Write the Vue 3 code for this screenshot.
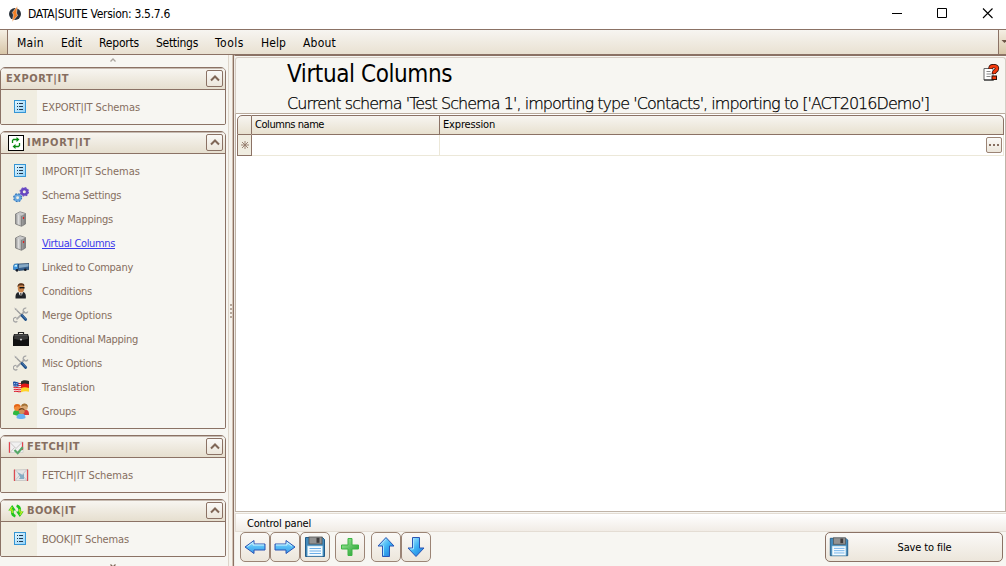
<script setup>
import { ref } from "vue";

const menu = [
  { label: "Main", width: 27 },
  { label: "Edit", width: 21 },
  { label: "Reports", width: 40 },
  { label: "Settings", width: 42 },
  { label: "Tools", width: 29 },
  { label: "Help", width: 25 },
  { label: "About", width: 33 },
];

const groups = [
  {
    title: "EXPORT|IT",
    width: 63,
    items: [{ label: "EXPORT|IT Schemas", icon: "list", width: 98 }],
  },
  {
    title: "IMPORT|IT",
    width: 64,
    icon: "import",
    items: [
      { label: "IMPORT|IT Schemas", icon: "list", width: 98 },
      { label: "Schema Settings", icon: "gears", width: 79 },
      { label: "Easy Mappings", icon: "server", width: 71 },
      { label: "Virtual Columns", icon: "server", width: 73 },
      { label: "Linked to Company", icon: "truck", width: 91 },
      { label: "Conditions", icon: "agent", width: 50 },
      { label: "Merge Options", icon: "tools", width: 70 },
      { label: "Conditional Mapping", icon: "case", width: 96 },
      { label: "Misc Options", icon: "tools", width: 60 },
      { label: "Translation", icon: "flags", width: 53 },
      { label: "Groups", icon: "people", width: 34 },
    ],
  },
  {
    title: "FETCH|IT",
    width: 53,
    icon: "mail-check",
    items: [{ label: "FETCH|IT Schemas", icon: "mail", width: 91 }],
  },
  {
    title: "BOOK|IT",
    width: 49,
    icon: "sync",
    items: [{ label: "BOOK|IT Schemas", icon: "list", width: 87 }],
  },
];

const tools = ["left", "right", "disk", "plus", "up", "down"];

const active = ref("Virtual Columns");

// spreads the letters so that a label takes the given width
const vFit = {
  mounted(el, { value }) {
    const natural = el.getBoundingClientRect().width;
    const count = el.textContent.length;
    el.style.letterSpacing = `${(value - natural) / count}px`;
  },
};
</script>

<template>
  <div class="window">
    <svg class="defs" width="0" height="0">
      <defs>
        <linearGradient id="g-blue" x1="0" y1="0" x2="1" y2="1">
          <stop offset="0" stop-color="#c8f4ff" />
          <stop offset="0.5" stop-color="#3fb4f4" />
          <stop offset="1" stop-color="#1673d8" />
        </linearGradient>
        <linearGradient id="g-arrow" x1="0" y1="0" x2="0" y2="1">
          <stop offset="0" stop-color="#b5ecff" />
          <stop offset="0.5" stop-color="#55bdf5" />
          <stop offset="1" stop-color="#3f9be8" />
        </linearGradient>
        <linearGradient id="g-green" x1="0" y1="0" x2="1" y2="1">
          <stop offset="0" stop-color="#a4eda0" />
          <stop offset="1" stop-color="#1d9a2a" />
        </linearGradient>
        <linearGradient id="g-list" x1="0" y1="0" x2="1" y2="1">
          <stop offset="0" stop-color="#e6f8ff" />
          <stop offset="1" stop-color="#8fd0f8" />
        </linearGradient>
        <linearGradient id="g-server" x1="0" y1="0" x2="1" y2="0">
          <stop offset="0" stop-color="#8c8c8c" />
          <stop offset="0.3" stop-color="#dcdcdc" />
          <stop offset="0.6" stop-color="#a2a2a2" />
          <stop offset="1" stop-color="#7d7d7d" />
        </linearGradient>
      </defs>

      <symbol id="list" viewBox="0 0 16 16">
        <rect x="1.500" y="1.500" width="11" height="12" fill="url(#g-list)" stroke="#3595d4" />
        <path d="M4 4.500h1M4 7.500h1M4 10.500h1M6 4.500h4M6 7.500h4M6 10.500h4" stroke="#203850" />
      </symbol>
      <symbol id="import" viewBox="0 0 16 16">
        <rect x="0.500" y="0.500" width="15" height="15" fill="#fff" stroke="#000" />
        <path d="M4.500 8V5.500l1-1H10M11.500 8v2.500l-1 1H6" fill="none" stroke="#088a10" stroke-width="1.300" />
        <path d="M8.500 2l3 2.500-3 2.500zM7.500 9l-3 2.500 3 2.500z" fill="#088a10" />
      </symbol>
      <symbol id="gears" viewBox="0 0 16 16">
        <circle cx="11.300" cy="4.800" r="2.800" fill="none" stroke="#6748c0" stroke-width="2.500" />
        <circle cx="11.300" cy="4.800" r="4.100" fill="none" stroke="#6f50c8" stroke-width="1.400" stroke-dasharray="1.700 1.500" />
        <circle cx="4.600" cy="10.800" r="2.700" fill="none" stroke="#68a7df" stroke-width="2.500" />
        <circle cx="4.600" cy="10.800" r="3.900" fill="none" stroke="#3676b8" stroke-width="1.300" stroke-dasharray="1.600 1.500" />
      </symbol>
      <symbol id="server" viewBox="0 0 16 16">
        <path d="M2.500 3L7 0.800l5.500 1.700v10.500L8.500 15.300l-6-2.300z" fill="url(#g-server)" stroke="#777" stroke-width="0.800" />
        <path d="M3 3.200L7.200 1.200l5 1.500L8.500 4.500z" fill="#c8c8c8" />
        <path d="M8.500 5v10" stroke="#777" stroke-width="0.700" />
        <path d="M10.500 6v2" stroke="#e02020" stroke-width="1.200" />
      </symbol>
      <symbol id="truck" viewBox="0 0 16 16">
        <path d="M5 5L16 4.500v6L6 11.500 5 10z" fill="#365f8c" stroke="#143455" stroke-width="0.600" />
        <path d="M6 5.600l9.500-0.500v2.400L6 9z" fill="#86a9c5" />
        <path d="M0.300 7.500l1-2.300 3.500-0.400v6.400l-4.500-0.800z" fill="#3b91dd" stroke="#2364a0" stroke-width="0.600" />
        <path d="M1.200 7.400l0.800-1.500 2-0.200v2z" fill="#c6f3ff" />
        <circle cx="4" cy="11.300" r="1.400" fill="#151a25" />
        <circle cx="12.300" cy="10.700" r="1.300" fill="#151a25" />
      </symbol>
      <symbol id="agent" viewBox="0 0 16 16">
        <path d="M2.500 15.500c-0.300-3.500 0.500-6 3-6.500h4.500c2.500 0.500 3.200 3.500 2.800 6.500z" fill="#20242a" />
        <path d="M5.500 9h4.500l-1.500 4.500-2-1.500z" fill="#f2f2f2" />
        <path d="M7.300 10h1l0.500 4-1.200 1z" fill="#111" />
        <ellipse cx="8" cy="5" rx="3.200" ry="4.500" fill="#ce874d" />
        <path d="M4.500 4.300C4.300 1 6 0 8.500 0.300c2 0 3.300 1.200 2.800 3.200L9.500 2.300 6 2.500z" fill="#5b351c" />
        <path d="M6.500 4h5v1.400H9.500l-0.500-0.500-0.600 0.500H6.500z" fill="#111" />
      </symbol>
      <symbol id="tools" viewBox="0 0 16 16">
        <path d="M2 1.500l7 7" stroke="#999" stroke-width="1.300" />
        <path d="M1.500 1l2 1 0.500 2" fill="none" stroke="#bbb" />
        <path d="M3.500 12.300l8.200-8" stroke="#a9a9a9" stroke-width="1.700" />
        <path d="M13.300 1.200a2.400 2.400 0 1 0 1.500 3.300M3.500 10.500a2.300 2.300 0 1 0 0.800 3.800" fill="none" stroke="#a5a5a5" stroke-width="1.300" />
        <path d="M9 8.500l3.700 4" stroke="#1f4f88" stroke-width="2.800" stroke-linecap="round" />
        <path d="M9.200 8.200l4 4.300" stroke="#6b9bcb" stroke-width="0.600" />
      </symbol>
      <symbol id="case" viewBox="0 0 16 16">
        <path d="M5.500 3V1.500h5V3" fill="none" stroke="#222" stroke-width="1.200" />
        <path d="M1 3h14l1 3v9H0V6z" fill="#111" />
        <path d="M1.500 3.700h13l0.500 4-5 1.300H6L1 7.700z" fill="#393939" />
        <path d="M1.500 4h13" stroke="#777" stroke-width="0.700" />
        <rect x="7.200" y="7.800" width="1.600" height="1.600" fill="#f2f2f2" />
      </symbol>
      <symbol id="flags" viewBox="0 0 16 16">
        <path d="M0 3c2.500-1.500 4 1.500 8 0v9.500c-3 1.500-4-1-7 0.500z" fill="#f6e7e7" />
        <path d="M0.500 8.500c3-1 4 1 7.500 0M0.700 10.500c3-1 4 1 7.500 0M1 12.500c3-1 4 1 7 0M5 4.500h3.500M5 6.500h3.500" fill="none" stroke="#da1c2c" stroke-width="1.200" />
        <path d="M0 3c2-1.200 4 0.500 5.500 0.400V7.500H0.500z" fill="#1c50a5" />
        <path d="M1 4.500h4M1.500 6.200h3.500" stroke="#d5e6fa" stroke-width="0.800" stroke-dasharray="0.900 0.900" />
        <path d="M8 2.500c2.500-1.800 5.500-1.300 8-0.500v4c-3-1-5.500-0.700-8 0.500z" fill="#2b2b2b" />
        <path d="M8 5.500c2.500-1.500 5-1.200 8-0.200v4c-3-1-5.500 0-8 0.800z" fill="#e41717" />
        <path d="M8 9.300c2.500-1.500 5-1.300 8-0.300v3.800c-3-1.300-5.500-0.300-8 0.400z" fill="#ffd428" />
      </symbol>
      <symbol id="people" viewBox="0 0 16 16">
        <path d="M0 11.500c0-3.500 1-4.500 4.500-4.500s4 1.500 3.500 5l-3 1z" fill="#2fb842" />
        <path d="M8.500 12c0-3.500 1-5 4-5s3.500 2 3.500 5z" fill="#d83a3c" />
        <circle cx="4.300" cy="4.500" r="3.400" fill="#f28a36" />
        <path d="M1 4.500C0.500 0.500 7.300 0 7.500 4L4.500 3z" fill="#e3641a" />
        <circle cx="11.500" cy="4" r="3.300" fill="#d9a873" />
        <path d="M8.200 3.800C8-0.500 15-0.500 14.800 4L12 2.500z" fill="#a57437" />
        <path d="M3.500 15c0-3 1.500-4.500 4.700-4.500S12.500 12 12.500 15c-2.200 1.300-6.800 1.300-9 0z" fill="#67b2f3" />
        <circle cx="8.700" cy="7.900" r="3" fill="#d29259" />
        <path d="M5.500 7.500C5.300 4 12 4 11.800 7.500L9 6.200z" fill="#70441f" />
      </symbol>
      <symbol id="mail" viewBox="0 0 16 16">
        <path d="M1 3l14-0.500v11H1z" fill="#e4e5e6" stroke="#b5b5b5" stroke-width="0.600" />
        <path d="M1.500 2.500v11.500M14.500 2.500v11.500" stroke="#dd4a50" stroke-width="1.200" />
        <path d="M2.500 3l5.500 6 5.500-6M2.500 13l4-4.500M13.500 13l-4-4.500" fill="none" stroke="#c3c7cb" />
        <path d="M4.500 5.500c2 0.500 3.500 1.500 5 2.500l1.500-1.500v5.500H5.800l1.500-1.700z" fill="#86adc4" />
      </symbol>
      <symbol id="mail-check" viewBox="0 0 16 16">
        <path d="M1 3h14v10.500H1z" fill="#f1f1f1" stroke="#c5c5c5" stroke-width="0.600" />
        <path d="M1.500 3v11M14.500 3v8" stroke="#e3414c" stroke-width="1.200" />
        <path d="M2 3.500l6 6 6-6M2 13.500l4.500-5" fill="none" stroke="#c9c5c5" />
        <path d="M6.500 11l3.200 3.200 5-6" fill="none" stroke="#57a868" stroke-width="2.200" />
      </symbol>
      <symbol id="sync" viewBox="0 0 16 16">
        <path d="M7 14.500C3.500 13.500 2.500 11 3 7.500H0.300L4.200 2 8 7.500H5.800c-0.500 2.500 0 3.500 2 4.500z" fill="#1fc51f" />
        <path d="M9 1.500c3.500 1 4.500 3.500 4 7h2.700L11.800 14 8 8.500h2.200c0.500-2.500 0-3.500-2-4.500z" fill="#1fc51f" />
        <path d="M4.200 4L2 7h2.200v3M11.800 12L14 9h-2.200V6" fill="none" stroke="#d0f020" stroke-width="1.100" />
      </symbol>
      <symbol id="left" viewBox="0 0 24 24">
        <path d="M2 12l9-6.500V9h11v6H11v3.500z" fill="url(#g-arrow)" stroke="#2a55b5" stroke-linejoin="round" />
        <path d="M4.500 11.500L10 7.500v2.500h11" fill="none" stroke="#c9f2ff" />
      </symbol>
      <symbol id="right" viewBox="0 0 24 24">
        <path d="M22 12l-9-6.500V9H2v6h11v3.500z" fill="url(#g-arrow)" stroke="#2a55b5" stroke-linejoin="round" />
        <path d="M3 10h11V7.500l5 3.700" fill="none" stroke="#c9f2ff" />
      </symbol>
      <symbol id="up" viewBox="0 0 24 24">
        <path d="M12 2.500l8 8.500h-4.500v10.500h-7V11H4z" fill="url(#g-blue)" stroke="#2a55b5" stroke-linejoin="round" />
        <path d="M6.500 10L12 4M9.500 10.500v10" fill="none" stroke="#a4e4ff" />
      </symbol>
      <symbol id="down" viewBox="0 0 24 24">
        <path d="M12 21.500L4 13h4.500V2.500h7V13H20z" fill="url(#g-blue)" stroke="#2a55b5" stroke-linejoin="round" />
        <path d="M9.500 3.500V14h-3" fill="none" stroke="#a4e4ff" />
      </symbol>
      <symbol id="plus" viewBox="0 0 24 24">
        <path d="M10 3.500h4v6.500h6.500v4H14v6.500h-4V14H3.500v-4H10z" fill="url(#g-green)" stroke="#3db544" />
      </symbol>
      <symbol id="disk" viewBox="0 0 24 24">
        <path d="M2.500 2.500h17l2 2v17h-19z" fill="#438abb" stroke="#215b88" />
        <rect x="6" y="2" width="13" height="7" fill="#929292" stroke="#555" stroke-width="0.800" />
        <rect x="13.500" y="2.800" width="3" height="5" fill="#3f3c3d" />
        <rect x="4.500" y="11" width="15" height="10" fill="#f4fbff" stroke="#a9d1e6" stroke-width="0.600" />
        <path d="M6.500 13.500h11.500M6.500 16h11.500M6.500 18.500h11.500" stroke="#6baee8" />
      </symbol>
    </svg>

    <header class="titlebar">
      <svg class="logo" width="16" height="16" viewBox="0 0 16 16">
        <ellipse cx="8" cy="8" rx="6" ry="6" fill="#29313b" />
        <path d="M10.500 0L5.300 6.500 6.500 9 5 16l5.600-6.500L9.500 7z" fill="#f17e25" stroke="#fff" stroke-width="0.500" />
      </svg>
      <span v-fit="142" class="app-name">DATA|SUITE Version: 3.5.7.6</span>
      <svg class="controls" width="106" height="14" viewBox="0 0 106 14">
        <path d="M1 6.500h10M46.500 1.500h9v9h-9z" fill="none" stroke="#000" />
        <path d="M92 1.500l9.500 9.500M101.500 1.500L92 11" stroke="#000" stroke-width="1.100" />
      </svg>
    </header>

    <nav class="menubar">
      <div class="grip"></div>
      <a v-for="m in menu" :key="m.label" class="menu-item"><span v-fit="m.width">{{ m.label }}</span></a>
      <div class="overflow">
        <svg width="7" height="4" viewBox="0 0 7 4"><path d="M0.500 0h6L3.500 3z" fill="#6e5648" /></svg>
      </div>
    </nav>

    <div class="body">
      <aside class="sidebar">
        <svg class="scroll" width="6" height="4" viewBox="0 0 6 4"><path d="M0.500 3.500L3 1l2.500 2.500" fill="none" stroke="#aaa49e" stroke-width="1.300" /></svg>
        <section v-for="g in groups" :key="g.title" class="group">
          <div class="group-head">
            <svg v-if="g.icon" class="head-icon" width="16" height="16"><use :href="'#' + g.icon" /></svg>
            <b v-fit="g.width">{{ g.title }}</b>
            <button class="collapse">
              <svg width="10" height="7" viewBox="0 0 10 7"><path d="M1 5.500l4-4 4 4" fill="none" stroke="#806757" stroke-width="2" /></svg>
            </button>
          </div>
          <ul class="items">
            <li v-for="i in g.items" :key="i.label" :class="{ active: i.label === active }" @click="active = i.label">
              <svg width="16" height="16"><use :href="'#' + i.icon" /></svg>
              <span v-fit="i.width">{{ i.label }}</span>
            </li>
          </ul>
        </section>
        <svg class="scroll last" width="6" height="4" viewBox="0 0 6 4"><path d="M0.500 0.500L3 3l2.500-2.500" fill="none" stroke="#806757" stroke-width="1.300" /></svg>
      </aside>

      <div class="splitter"><i v-for="n in 4" :key="n"></i></div>

      <main class="content">
        <div class="heading">
          <div>
            <h1><span v-fit="165">Virtual Columns</span></h1>
            <p><span v-fit="642">Current schema 'Test Schema 1', importing type 'Contacts', importing to ['ACT2016Demo']</span></p>
          </div>
          <svg class="help" width="17" height="17" viewBox="0 0 17 17">
            <path d="M1 4.500h9v11.500H1z" fill="#fff" stroke="#666" />
            <path d="M3.500 7.500h4M3.500 10h5M3.500 12.500h4" stroke="#888" />
            <path d="M1 16h10" stroke="#222" />
            <path d="M7.500 5V3.700C8 1.500 13.500 1.300 14 4s-3.200 3-3.200 6" fill="none" stroke="#30100c" stroke-width="4.200" />
            <path d="M7.500 4.500V3.700C8 1.500 13.500 1.500 14 4s-3.200 3-3.200 5.500" fill="none" stroke="#f43a0c" stroke-width="2.800" />
            <rect x="9" y="12" width="4.500" height="3.500" fill="#f43a0c" stroke="#30100c" />
          </svg>
        </div>

        <div class="grid-area">
          <div class="grid">
            <div class="cell head corner"></div>
            <div class="cell head"><span v-fit="69">Columns name</span></div>
            <div class="cell head end"><span v-fit="52">Expression</span></div>
            <div class="cell marker">
              <svg width="8" height="8" viewBox="0 0 8 8"><path d="M4 0v8M0 4h8M1 1l6 6M7 1L1 7" stroke="#91796a" stroke-width="0.900" /></svg>
            </div>
            <div class="cell"></div>
            <div class="cell editor">
              <button class="ellipsis"><i></i><i></i><i></i></button>
            </div>
          </div>
        </div>

        <div class="panel-title"><span v-fit="64">Control panel</span></div>
        <div class="toolbar">
          <button v-for="t in tools" :key="t" class="tool" :class="t">
            <svg width="24" height="24"><use :href="'#' + t" /></svg>
          </button>
          <button class="save">
            <svg width="22" height="22" viewBox="0 0 24 24"><use href="#disk" /></svg>
            <span class="save-label"><span v-fit="54">Save to file</span></span>
          </button>
        </div>
      </main>
    </div>
  </div>
</template>

<style>
body {
  margin: 0;
  overflow: hidden;
}
</style>

<style scoped>
.window {
  width: 1006px;
  height: 566px;
  display: flex;
  flex-direction: column;
  overflow: hidden;
  background: #f7f6f2;
  color: #000;
  font: 11px/14px Tahoma, "DejaVu Sans Condensed", "DejaVu Sans", sans-serif;
  font-stretch: condensed;
}
.window * {
  box-sizing: border-box;
}
span,
b {
  white-space: nowrap;
}
svg {
  display: block;
  flex: none;
}
.defs {
  position: absolute;
}
button {
  padding: 0;
  font: inherit;
  color: inherit;
  border: 1px solid #9b8475;
  background: linear-gradient(#faf9f7, #ece6db);
}

.titlebar {
  flex: none;
  height: 29px;
  display: flex;
  align-items: center;
  padding: 0 9px 2px 7px;
  background: #fff;
  font-size: 12px;
}
.app-name {
  margin-left: 5px;
}
.controls {
  margin-left: auto;
}

.menubar {
  flex: none;
  height: 26px;
  display: flex;
  align-items: center;
  gap: 17px;
  border-top: 1px solid #8b7265;
  border-bottom: 1px solid #8b7265;
  background: linear-gradient(#f7f5f1, #e9e1d2);
}
.grip {
  width: 8px;
  height: 24px;
  margin-right: -8px;
  border-right: 1px solid #8b7265;
  background: linear-gradient(#f5efe4, #d8c6a8);
}
.menu-item {
  display: flex;
  padding-top: 1px;
  font-size: 12px;
}
.overflow {
  align-self: stretch;
  width: 8px;
  margin-left: auto;
  display: flex;
  align-items: center;
  padding-left: 2px;
  overflow: hidden;
  border-left: 1px solid #8b7265;
  background: linear-gradient(#f5efe4, #d8c6a8);
}

.body {
  flex: 1;
  min-height: 0;
  display: flex;
}
.sidebar {
  width: 228px;
  display: flex;
  flex-direction: column;
  gap: 6px;
  padding-top: 3px;
  color: #866e60;
}
.scroll {
  margin: 0 0 -1px 110px;
}
.scroll.last {
  margin-top: 1px;
}
.group {
  flex: none;
  width: 226px;
  border: 1px solid #8b7265;
  border-radius: 5px 5px 2px 2px;
  overflow: hidden;
}
.group-head {
  height: 22px;
  display: flex;
  align-items: center;
  padding: 0 2px 0 5px;
  border-bottom: 1px solid #8b7265;
  background: linear-gradient(#f8f6f2, #e6dfcf);
  box-shadow: inset 0 1px #c6bab0;
}
.group-head b {
  padding-top: 1px;
}
.head-icon {
  margin: 1px 3px 0 2px;
}
.collapse {
  width: 17px;
  height: 17px;
  margin-left: auto;
  display: flex;
  align-items: center;
  justify-content: center;
  border-color: #8b7265;
  border-radius: 2px;
}
.items {
  margin: 0;
  padding: 5px 0;
  list-style: none;
  background: linear-gradient(90deg, #f0ede1 36px, #f7f6f2 36px);
}
.items li {
  height: 24px;
  display: flex;
  align-items: center;
  gap: 13px;
  padding-left: 12px;
}
.items span {
  padding-top: 2px;
}
.active span {
  color: #3b3beb;
  text-decoration: underline;
}

.splitter {
  flex: none;
  width: 6px;
  display: flex;
  flex-direction: column;
  align-items: center;
  justify-content: center;
  gap: 2px;
  border-left: 1px solid #ddd5ca;
  border-right: 1px solid #8b7265;
  background: linear-gradient(90deg, #f6f3ed 3px, #d2c2b3 3px);
}
.splitter i {
  width: 2px;
  height: 2px;
  margin-right: 1px;
  background: #b5a79b;
}

.content {
  flex: 1;
  min-width: 0;
  display: flex;
  flex-direction: column;
  border-left: 1px solid #f0ebe5;
  border-top: 1px solid #8b7265;
}
.heading {
  flex: none;
  height: 57px;
  margin-top: 1px;
  display: flex;
  justify-content: space-between;
  padding: 0 5px 0 51px;
  border: 1px solid #d6cdc4;
  border-bottom: 1px solid #b9aa9c;
  border-radius: 3px 3px 0 0;
}
h1 {
  margin: 2px 0 0;
  font-size: 24px;
  line-height: 29px;
  font-weight: normal;
}
p {
  margin: 5px 0 0;
  font: 16px/20px "DejaVu Sans", sans-serif;
  font-weight: 200;
  -webkit-text-stroke: 0.25px #000;
}
.help {
  margin-top: 6px;
}

.grid-area {
  flex: 1;
  padding: 1px 1px 0;
  border: solid #c0b4a8;
  border-width: 0 1px 1px;
  background: #fff;
}
.grid {
  display: grid;
  grid-template-columns: 15px 188px 1fr;
  grid-template-rows: 20px 21px;
}
.cell {
  display: flex;
  align-items: center;
  border-right: 1px solid #ece8d9;
  border-bottom: 1px solid #ece8d9;
}
.head {
  padding-left: 3px;
  border: 1px solid #8b7265;
  border-left: 0;
  background: linear-gradient(#f7f5f1, #e8e1d0);
}
.corner {
  border-left: 1px solid #8b7265;
  border-radius: 5px 0 0;
}
.end {
  border-radius: 0 5px 0 0;
}
.marker {
  justify-content: center;
  border: 1px solid #8b7265;
  border-top: 0;
  background: #f0ede1;
}
.editor {
  justify-content: flex-end;
  padding-right: 1px;
}
.ellipsis {
  width: 16px;
  height: 16px;
  display: flex;
  align-items: center;
  justify-content: center;
  gap: 2px;
  border-radius: 2px;
}
.ellipsis i {
  width: 2px;
  height: 2px;
  background: #866e60;
}

.panel-title {
  flex: none;
  height: 19px;
  margin-top: 1px;
  display: flex;
  align-items: center;
  padding: 2px 0 0 11px;
  border: 1px solid #e4ddd4;
  border-width: 1px 0 1px 1px;
  background: linear-gradient(#fff, #f1ece6);
}
.toolbar {
  flex: none;
  height: 34px;
  display: flex;
  padding: 0 3px 4px 5px;
}
.tool {
  width: 30px;
  height: 30px;
  display: flex;
  align-items: center;
  justify-content: center;
  border-radius: 5px;
}
.plus {
  margin-left: 5px;
}
.up {
  margin-left: 6px;
}
.save {
  width: 178px;
  height: 30px;
  margin-left: auto;
  display: flex;
  align-items: center;
  padding-left: 2px;
  border-color: #8b7265;
  border-radius: 5px;
}
.save-label {
  flex: 1;
  padding: 1px 3px 0 0;
}
</style>
